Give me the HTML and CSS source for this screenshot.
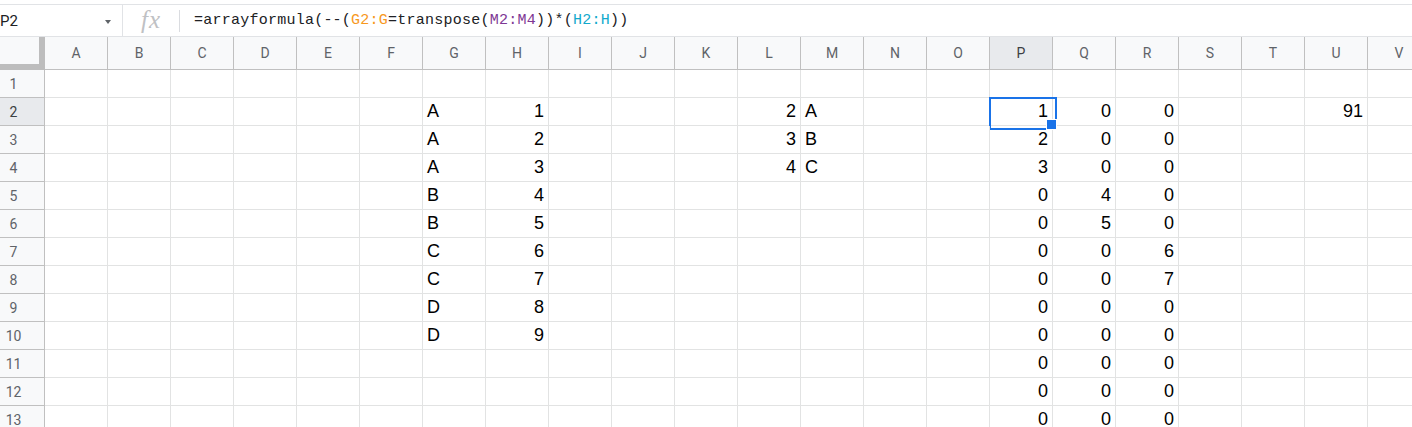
FILE: index.html
```html
<!DOCTYPE html>
<html lang="en">
<head>
  <meta charset="UTF-8" />
  <title>Sheet</title>
  <link rel="stylesheet" href="styles.css">
</head>
<body>
  <div class="formula-bar">
    <div class="name-box">
      <span class="name">P2</span>
      <span class="caret"></span>
    </div>
    <div class="fx">fx</div>
    <div class="formula">=arrayformula(--(<span class="ref-orange">G2:G</span>=transpose(<span class="ref-purple">M2:M4</span>))*(<span class="ref-teal">H2:H</span>))</div>
  </div>

  <div id="sheet" class="sheet"></div>

  <script>
    const cols = "ABCDEFGHIJKLMNOPQRSTUV".split("");
    const data = {
      2: { G: "A", H: "1", L: "2", M: "A", P: "1", Q: "0", R: "0", U: "91" },
      3: { G: "A", H: "2", L: "3", M: "B", P: "2", Q: "0", R: "0" },
      4: { G: "A", H: "3", L: "4", M: "C", P: "3", Q: "0", R: "0" },
      5: { G: "B", H: "4", P: "0", Q: "4", R: "0" },
      6: { G: "B", H: "5", P: "0", Q: "5", R: "0" },
      7: { G: "C", H: "6", P: "0", Q: "0", R: "6" },
      8: { G: "C", H: "7", P: "0", Q: "0", R: "7" },
      9: { G: "D", H: "8", P: "0", Q: "0", R: "0" },
      10: { G: "D", H: "9", P: "0", Q: "0", R: "0" },
      11: { P: "0", Q: "0", R: "0" },
      12: { P: "0", Q: "0", R: "0" },
      13: { P: "0", Q: "0", R: "0" }
    };

    let html = '<div class="corner"></div>';
    html += cols.map(c => `<div class="col-head${c === "P" ? " active" : ""}">${c}</div>`).join("");

    for (let r = 1; r <= 13; r++) {
      const row = data[r] || {};
      html += `<div class="row-head${r === 2 ? " active" : ""}">${r}</div>`;
      html += cols.map(c => {
        const v = row[c] || "";
        const isNum = v !== "" && !isNaN(v);
        const sel = (r === 2 && c === "P") ? " selected" : "";
        return `<div class="cell${isNum ? " num" : ""}${sel}">${v}</div>`;
      }).join("");
    }
    document.getElementById("sheet").innerHTML = html;
  </script>
</body>
</html>
```

FILE: styles.css
```css
* {
  box-sizing: border-box;
}

body {
  margin: 0;
  background: #fff;
  overflow: hidden;
  font-family: "Liberation Sans", Arial, sans-serif;
}

/* formula bar */
.formula-bar {
  display: flex;
  align-items: center;
  height: 33px;
  margin-top: 4px;
  border-top: 1px solid #e1e3e6;
  border-bottom: 1px solid #e1e3e6;
  width: 1412px;
}

.name-box {
  width: 123px;
  align-self: stretch;
  display: flex;
  align-items: center;
  justify-content: space-between;
  padding-right: 11px;
  border-right: 1px solid #e1e3e6;
}

.name {
  margin-left: 0;
  font-family: Roboto, "Liberation Sans", sans-serif;
  font-size: 15px;
  color: #202124;
}

.caret {
  width: 0;
  height: 0;
  border-left: 3px solid transparent;
  border-right: 3px solid transparent;
  border-top: 4px solid #5f6368;
  margin-top: 2px;
}

.fx {
  width: 57px;
  height: 22px;
  border-right: 1px solid #dadce0;
  text-align: center;
  font-family: "Liberation Serif", serif;
  font-style: italic;
  font-size: 25px;
  line-height: 20px;
  color: #bfc1c4;
  letter-spacing: 1px;
}

.formula {
  margin-left: 14px;
  font-family: "Liberation Mono", "DejaVu Sans Mono", monospace;
  font-size: 15px;
  letter-spacing: 0.24px;
  color: #202124;
  white-space: nowrap;
}

.ref-orange { color: #f7981d; }
.ref-purple { color: #7e3794; }
.ref-teal { color: #11a9cc; }

/* grid */
.sheet {
  display: grid;
  grid-template-columns: 45px repeat(22, 63px);
  grid-template-rows: 33px;
  grid-auto-rows: 28px;
  width: 1431px;
}

.corner {
  background: #f8f9fa;
  border-right: 6px solid #bdbdbd;
  border-bottom: 6px solid #bdbdbd;
}

.col-head,
.row-head {
  background: #f8f9fa;
  font-family: Roboto, "Liberation Sans", sans-serif;
  font-size: 14px;
  color: #5f6368;
  display: flex;
  align-items: center;
  border-right: 1px solid #c0c0c0;
  border-bottom: 1px solid #c0c0c0;
}

.col-head {
  justify-content: center;
}

.row-head {
  justify-content: center;
  padding-right: 17px;
}

.col-head.active,
.row-head.active {
  background: #e8eaed;
  color: #3c4043;
}

.cell {
  position: relative;
  display: flex;
  align-items: flex-end;
  padding: 0 4px 3px;
  font-size: 18px;
  color: #000;
  border-right: 1px solid #e2e3e3;
  border-bottom: 1px solid #e2e3e3;
  white-space: nowrap;
}

.cell.num {
  justify-content: flex-end;
}

.cell.selected::before {
  content: "";
  position: absolute;
  top: -1px;
  left: -1px;
  width: 64px;
  height: 29px;
  border: 2px solid #1a73e8;
}

.cell.selected::after {
  content: "";
  position: absolute;
  right: -5px;
  bottom: -5px;
  width: 9px;
  height: 9px;
  background: #1a73e8;
  border: 1px solid #fff;
  z-index: 2;
}
```
